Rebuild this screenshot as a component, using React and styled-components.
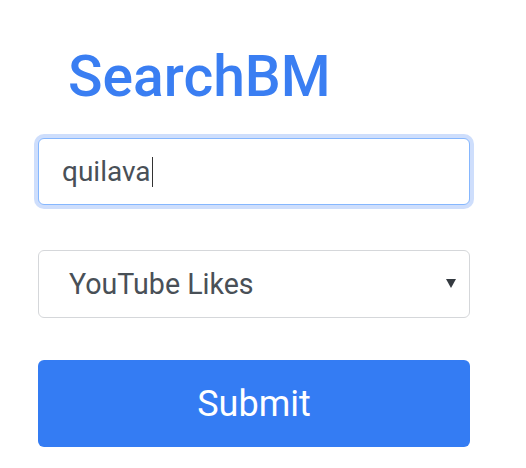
import React from "react";
import styled, { createGlobalStyle } from "styled-components";

const Global = createGlobalStyle`
  html, body { margin: 0; padding: 0; background: #fff; }
  body { font-family: Roboto, "Noto Sans", sans-serif; }
  * { box-sizing: border-box; }
`;

const Page = styled.div`
  display: flex;
  flex-direction: column;
  width: 432px;
  margin-left: 38px;
  padding-top: 41px;
`;

const Title = styled.h1`
  margin: 0 0 0 30px;
  font-family: Roboto, sans-serif;
  font-weight: 500;
  font-size: 57px;
  line-height: 72px;
  color: #3a7ef2;
`;

const Form = styled.form`
  display: flex;
  flex-direction: column;
  margin-top: 25px;
`;

const Field = styled.div`
  height: ${(p) => p.$h}px;
  margin-bottom: ${(p) => p.$mb}px;
  border: 1px solid ${(p) => (p.$focused ? "#86b7fe" : "#d5d7da")};
  border-radius: 6px;
  background: #fff;
  box-shadow: ${(p) => (p.$focused ? "0 0 0 4px rgba(59,125,245,0.25)" : "none")};
  display: flex;
  align-items: center;
  padding: 0 13px 0 ${(p) => p.$pad}px;
  font-size: ${(p) => p.$fs}px;
  color: #495057;
`;

const Value = styled.span`
  flex: 1;
`;

const Caret = styled.span`
  display: inline-block;
  width: 1px;
  height: 30px;
  background: #333;
  vertical-align: -6px;
  margin-left: 1px;
`;

const Arrow = styled.span`
  width: 0;
  height: 0;
  margin-top: -2px;
  border-left: 5px solid transparent;
  border-right: 5px solid transparent;
  border-top: 9px solid #343a40;
`;

const Button = styled.button`
  height: 87px;
  border: none;
  border-radius: 6px;
  background: #347cf3;
  color: #fff;
  font-family: Roboto, sans-serif;
  font-size: 36px;
  cursor: pointer;
`;

export default function App() {
  return (
    <>
      <Global />
      <Page>
        <Title>SearchBM</Title>
        <Form onSubmit={(e) => e.preventDefault()}>
          <Field $focused $pad={23} $h={67} $fs={28} $mb={45}>
            <Value>
              quilava<Caret />
            </Value>
          </Field>
          <Field $pad={30} $h={68} $fs={28.6} $mb={42}>
            <Value>YouTube Likes</Value>
            <Arrow />
          </Field>
          <Button type="submit">Submit</Button>
        </Form>
      </Page>
    </>
  );
}
